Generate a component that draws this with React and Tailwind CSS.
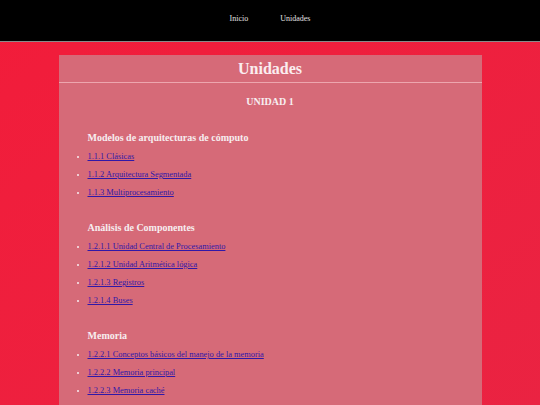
import React from "react";

const sections = [
  {
    title: "Modelos de arquitecturas de cómputo",
    items: ["1.1.1 Clásicas", "1.1.2 Arquitectura Segmentada", "1.1.3 Multiprocesamiento"],
  },
  {
    title: "Análisis de Componentes",
    items: [
      "1.2.1.1 Unidad Central de Procesamiento",
      "1.2.1.2 Unidad Aritmética lógica",
      "1.2.1.3 Registros",
      "1.2.1.4 Buses",
    ],
  },
  {
    title: "Memoria",
    items: [
      "1.2.2.1 Conceptos básicos del manejo de la memoria",
      "1.2.2.2 Memoria principal",
      "1.2.2.3 Memoria caché",
    ],
  },
];

export default function App() {
  return (
    <div
      className="min-h-screen bg-gradient-to-br from-[#f21c3a] to-[#ea2342] text-[#f7eef0]"
      style={{ fontFamily: '"Liberation Serif", "Times New Roman", serif' }}
    >
      <header className="h-[42px] bg-black border-b border-[#8a8a8a] flex justify-center pt-[14px]">
        <nav className="flex gap-[32px] text-[8px] leading-[10px] text-[#e0e0e0] h-[10px]">
          <a href="#" className="text-[#e0e0e0]">Inicio</a>
          <a href="#" className="text-[#e0e0e0]">Unidades</a>
        </nav>
      </header>
      <main className="w-[423px] mx-auto mt-[13px] bg-[#d66a78] pb-[20px]">
        <h1 className="h-[28px] leading-[27px] text-center text-[16px] font-bold border-b border-[#eda6ae] text-[#fbeef0]">
          Unidades
        </h1>
        <h3 className="pt-[13px] h-[25px] leading-[12px] text-center text-[10px] font-bold">UNIDAD 1</h3>
        {sections.map((s) => (
          <section key={s.title} className="pt-[24px]">
            <h3 className="pl-[29px] h-[12px] leading-[12px] text-[10px] font-bold">{s.title}</h3>
            <ul className="list-disc pl-[29px] mt-[8px] flex flex-col gap-[8px] text-[8.4px] leading-[10px]">
              {s.items.map((it) => (
                <li key={it} className="h-[10px]">
                  <a href="#" className="underline text-[#3018a8]">{it}</a>
                </li>
              ))}
            </ul>
          </section>
        ))}
      </main>
    </div>
  );
}
